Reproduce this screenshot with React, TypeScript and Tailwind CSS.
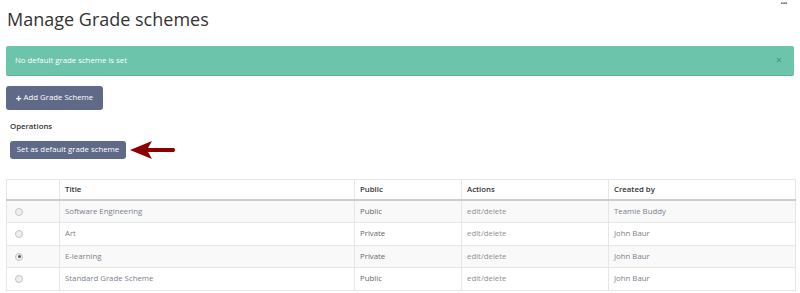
const rows = [
  { title: 'Software Engineering', pub: 'Public', by: 'Teamie Buddy', checked: false },
  { title: 'Art', pub: 'Private', by: 'John Baur', checked: false },
  { title: 'E-learning', pub: 'Private', by: 'John Baur', checked: true },
  { title: 'Standard Grade Scheme', pub: 'Public', by: 'John Baur', checked: false },
]

function Radio({ checked }: { checked: boolean }) {
  return (
    <span className="inline-flex w-[8px] h-[8px] rounded-full border border-[#c4c4c4] bg-[#efefef] items-center justify-center align-middle">
      {checked && <span className="w-[3px] h-[3px] rounded-full bg-[#555]" />}
    </span>
  )
}

function Arrow() {
  return (
    <svg width="46" height="18" viewBox="0 0 46 18" className="ml-[4px]">
      <path d="M0 9 L22 0 L18 7 L44 7 Q46 9 44 11 L18 11 L22 18 Z" fill="#8b0000" />
    </svg>
  )
}

export default function App() {
  return (
    <div className="relative w-[800px] h-[293px] bg-white font-['Open_Sans'] overflow-hidden">
      <span className="absolute right-[13px] top-0 text-[7px] leading-[8px] text-[#555] tracking-[-0.5px]">•••</span>

      <div className="px-[6px] pt-[6px]">
        <h1 className="pl-[1px] text-[18px] leading-[26px] text-[#333] font-normal">Manage Grade schemes</h1>

        <div className="mt-[14px] h-[30px] flex items-center justify-between rounded-[2px] bg-[#6cc4aa] border-b border-[#5cb59a] px-[9px]">
          <span className="text-[7.8px] text-white">No default grade scheme is set</span>
          <span className="text-[11px] text-[#4d8f7b] pr-[3px]">×</span>
        </div>

        <button className="mt-[10px] h-[24px] w-[97px] rounded-[3px] bg-[#5e6a88] text-white text-[7.8px] flex items-center justify-center gap-[2px]">
          <span className="font-bold text-[10px] leading-none">+</span> Add Grade Scheme
        </button>

        <div className="mt-[11px] pl-[4px] text-[7.8px] font-semibold text-[#333]">Operations</div>

        <div className="mt-[8px] pl-[4px] flex items-center">
          <button className="h-[18px] w-[116px] rounded-[3px] bg-[#5e6a88] text-white text-[7.8px]">
            Set as default grade scheme
          </button>
          <Arrow />
        </div>

        <table className="mt-[20px] w-[789px] border border-[#e6e6e6] border-collapse text-[7.8px] table-fixed">
          <colgroup>
            <col className="w-[53px]" />
            <col className="w-[295px]" />
            <col className="w-[107px]" />
            <col className="w-[147px]" />
            <col className="w-[187px]" />
          </colgroup>
          <thead>
            <tr className="h-[21px] border-b-2 border-[#ccc]">
              <th className="border-r border-[#e6e6e6]" />
              <th className="text-left font-semibold text-[#333] pl-[5px] border-r border-[#e6e6e6]">Title</th>
              <th className="text-left font-semibold text-[#333] pl-[5px] border-r border-[#e6e6e6]">Public</th>
              <th className="text-left font-semibold text-[#333] pl-[5px] border-r border-[#e6e6e6]">Actions</th>
              <th className="text-left font-semibold text-[#333] pl-[5px]">Created by</th>
            </tr>
          </thead>
          <tbody>
            {rows.map((r, i) => (
              <tr key={r.title} className={`h-[22.5px] border-t border-[#e6e6e6] ${i % 2 === 0 ? 'bg-[#f9f9f9]' : 'bg-white'}`}>
                <td className="pl-[8px] border-r border-[#e6e6e6]">
                  <Radio checked={r.checked} />
                </td>
                <td className="pl-[5px] text-[#7a7f8c] border-r border-[#e6e6e6]">{r.title}</td>
                <td className="pl-[5px] text-[#666] border-r border-[#e6e6e6]">{r.pub}</td>
                <td className="pl-[5px] text-[#909090] border-r border-[#e6e6e6]">edit/delete</td>
                <td className="pl-[5px] text-[#7a7f8c]">{r.by}</td>
              </tr>
            ))}
          </tbody>
        </table>
      </div>
    </div>
  )
}
